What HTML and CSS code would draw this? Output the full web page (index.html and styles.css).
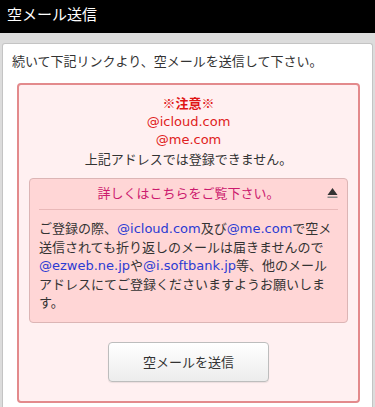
FILE: index.html
```
<!DOCTYPE html>
<html lang="ja">
<head>
<meta charset="utf-8">
<link rel="stylesheet" href="styles.css">
</head>
<body>
<header class="topbar">空メール送信</header>
<main class="page">
  <section class="panel">
    <p class="intro">続いて下記リンクより、空メールを送信して下さい。</p>
    <div class="notice">
      <p class="notice-title">※注意※</p>
      <p class="notice-red">@icloud.com</p>
      <p class="notice-red">@me.com</p>
      <p class="notice-text">上記アドレスでは登録できません。</p>
      <div class="details">
        <div class="details-head">
          <span class="details-title">詳しくはこちらをご覧下さい。</span>
          <svg class="eject" width="11" height="12" viewBox="0 0 11 12"><polygon points="5.5,1 10.5,8 0.5,8" fill="#333"/><rect x="0.5" y="9.5" width="10" height="1.5" fill="#888"/></svg>
        </div>
        <p class="details-body">ご登録の際、<span class="link">@icloud.com</span>及び<span class="link">@me.com</span>で空メ<br>送信されても折り返しのメールは届きませんので<br><span class="link">@ezweb.ne.jp</span>や<span class="link">@i.softbank.jp</span>等、他のメール<br>アドレスにてご登録くださいますようお願いしま<br>す。</p>
      </div>
      <div class="actions">
        <button class="send-btn" type="button">空メールを送信</button>
      </div>
    </div>
  </section>
</main>
</body>
</html>
```
FILE: styles.css
```
* { box-sizing: border-box; }
html, body { margin: 0; padding: 0; }
body {
  font-family: "DejaVu Sans", "Noto Sans CJK JP", sans-serif;
  font-size: 13px;
  color: #333;
  background: #dcdcdc;
}
p { margin: 0; }
.topbar {
  height: 33px;
  background: #000;
  color: #fff;
  font-family: "Noto Sans CJK JP", sans-serif;
  font-size: 15px;
  line-height: 28px;
  padding-left: 7px;
}
.page {
  padding: 10px 2px 0 2px;
}
.panel {
  background: #fff;
  border: 1px solid #c4c4c4;
  border-bottom: none;
  border-radius: 3px 3px 0 0;
  padding: 8px 12px 10px 9px;
}
.intro {
  line-height: 18px;
  font-family: "Noto Sans CJK JP", sans-serif;
}
.notice {
  margin-top: 13px;
  margin-left: 5px;
  background: #fff0f1;
  border: 2px solid #e38a8c;
  border-radius: 4px;
  padding: 9px 10px 19px 10px;
  text-align: center;
  line-height: 18.6px;
}
.notice-title {
  color: #e01515;
  font-weight: bold;
  font-family: "Noto Sans CJK JP", sans-serif;
}
.notice-red { color: #e02020; }
.notice-text { color: #333; font-family: "Noto Sans CJK JP", sans-serif; }
.details {
  margin-top: 10px;
  background: #ffd6d6;
  border: 1px solid #dcb5b5;
  border-radius: 4px;
  padding: 5px 9px 9px 9px;
  text-align: left;
}
.details-head {
  display: flex;
  align-items: center;
  justify-content: center;
  position: relative;
  padding-bottom: 7px;
  border-bottom: 1px solid #e9b8b8;
  line-height: 18px;
}
.details-title {
  color: #cc1a6e;
  font-family: "Noto Sans CJK JP", sans-serif;
}
.eject {
  position: absolute;
  right: 0;
  top: 3px;
}
.details-body {
  margin-top: 10px;
  line-height: 18.5px;
  white-space: nowrap;
}
.link { color: #2b3bd3; }
.actions {
  margin-top: 19px;
  display: flex;
  justify-content: center;
}
.send-btn {
  width: 161px;
  height: 40px;
  border: 1px solid #bdbdbd;
  border-radius: 4px;
  background: linear-gradient(#ffffff, #ececec);
  font-family: "Noto Sans CJK JP", sans-serif;
  font-size: 13px;
  color: #333;
  box-shadow: 0 1px 1px rgba(0,0,0,0.08);
}
```
